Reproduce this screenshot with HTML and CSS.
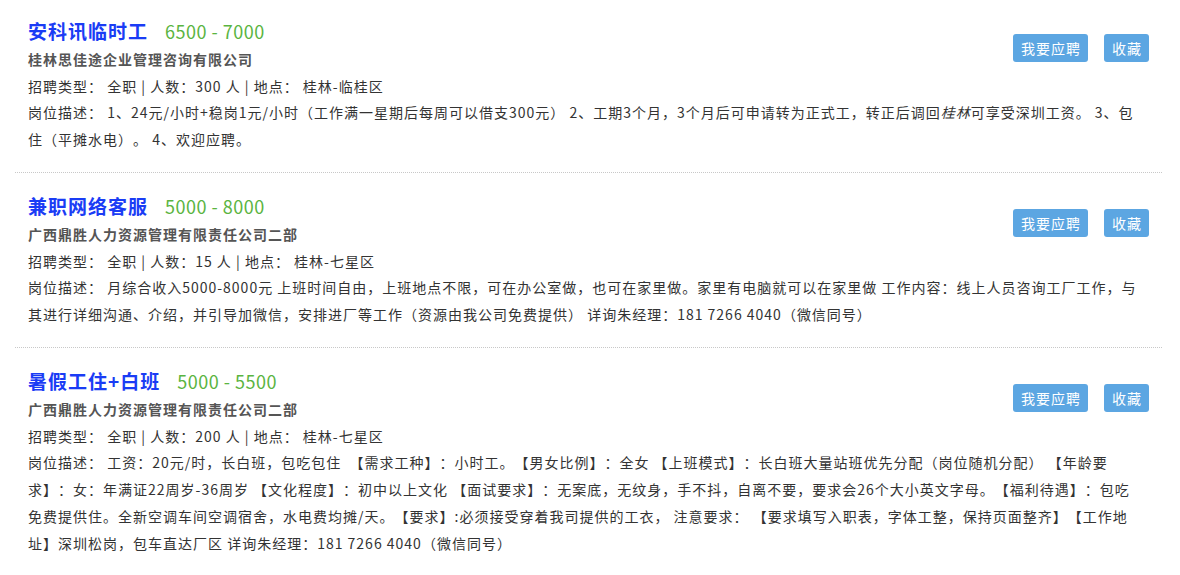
FILE: index.html
```html
<!DOCTYPE html>
<html lang="zh-CN">
<head>
<meta charset="utf-8">
<title>职位列表</title>
<link rel="stylesheet" href="styles.css">
</head>
<body>
<div class="job-list">
  <div class="job-item">
    <div class="job-head">
      <div class="job-main">
        <div class="job-title-row"><a class="job-title">安科讯临时工</a><span class="job-salary">6500 - 7000</span></div>
        <div class="job-company">桂林思佳途企业管理咨询有限公司</div>
        <div class="job-info">招聘类型： 全职 | 人数：300 人 | 地点： 桂林-临桂区</div>
      </div>
      <div class="job-actions"><a class="btn">我要应聘</a><a class="btn">收藏</a></div>
    </div>
    <div class="job-desc">岗位描述： 1、24元/小时+稳岗1元/小时（工作满一星期后每周可以借支300元） 2、工期3个月，3个月后可申请转为正式工，转正后调回<em>桂林</em>可享受深圳工资。 3、包住（平摊水电）。 4、欢迎应聘。</div>
  </div>
  <div class="job-item">
    <div class="job-head">
      <div class="job-main">
        <div class="job-title-row"><a class="job-title">兼职网络客服</a><span class="job-salary">5000 - 8000</span></div>
        <div class="job-company">广西鼎胜人力资源管理有限责任公司二部</div>
        <div class="job-info">招聘类型： 全职 | 人数：15 人 | 地点： 桂林-七星区</div>
      </div>
      <div class="job-actions"><a class="btn">我要应聘</a><a class="btn">收藏</a></div>
    </div>
    <div class="job-desc">岗位描述： 月综合收入5000-8000元 上班时间自由，上班地点不限，可在办公室做，也可在家里做。家里有电脑就可以在家里做 工作内容：线上人员咨询工厂工作，与其进行详细沟通、介绍，并引导加微信，安排进厂等工作（资源由我公司免费提供） 详询朱经理：181 7266 4040（微信同号）</div>
  </div>
  <div class="job-item">
    <div class="job-head">
      <div class="job-main">
        <div class="job-title-row"><a class="job-title">暑假工住+白班</a><span class="job-salary">5000 - 5500</span></div>
        <div class="job-company">广西鼎胜人力资源管理有限责任公司二部</div>
        <div class="job-info">招聘类型： 全职 | 人数：200 人 | 地点： 桂林-七星区</div>
      </div>
      <div class="job-actions"><a class="btn">我要应聘</a><a class="btn">收藏</a></div>
    </div>
    <div class="job-desc">岗位描述： 工资：20元/时，长白班，包吃包住 &nbsp;【需求工种】：小时工。【男女比例】：全女 【上班模式】：长白班大量站班优先分配（岗位随机分配） 【年龄要求】：女：年满证22周岁-36周岁 【文化程度】：初中以上文化 【面试要求】：无案底，无纹身，手不抖，自离不要，要求会26个大小英文字母。【福利待遇】：包吃免费提供住。全新空调车间空调宿舍，水电费均摊/天。【要求】:必须接受穿着我司提供的工衣， 注意要求： 【要求填写入职表，字体工整，保持页面整齐】【工作地址】深圳松岗，包车直达厂区 详询朱经理：181 7266 4040（微信同号）</div>
  </div>
</div>
</body>
</html>
```
FILE: styles.css
```css
html, body {
  margin: 0;
  padding: 0;
  background: #fff;
}
body {
  font-family: "Noto Sans CJK SC", "Noto Sans", sans-serif;
  font-size: 14px;
  color: #333;
  letter-spacing: 1px;
  text-spacing-trim: space-all;
}
.job-list {
  margin: 0 18px 0 15px;
}
.job-item {
  padding: 18px 13px 19px 13px;
  border-bottom: 1px dotted #c8c8c8;
}
.job-item:first-child {
  padding-top: 16px;
}
.job-head {
  display: flex;
  justify-content: space-between;
  align-items: flex-start;
}
.job-title-row {
  height: 30px;
  line-height: 30px;
  display: flex;
  align-items: baseline;
}
.job-title {
  font-size: 19px;
  font-weight: bold;
  color: #1a3cf5;
}
.job-salary {
  font-size: 18px;
  color: #5ab441;
  margin-left: 17px;
  letter-spacing: 0.5px;
}
.job-company {
  font-weight: bold;
  color: #555;
  line-height: 26px;
}
.job-info {
  margin-top: 1px;
  line-height: 26px;
}
.job-actions {
  display: flex;
  gap: 16px;
  margin-top: 18px;
}
.btn {
  display: block;
  height: 28px;
  line-height: 28px;
  padding: 0 7px 0 8px;
  background: #5ca6e2;
  color: #fff;
  border-radius: 3px;
}
.job-desc {
  line-height: 27px;
  padding-right: 9px;
}
.job-desc em {
  font-style: italic;
}
```
